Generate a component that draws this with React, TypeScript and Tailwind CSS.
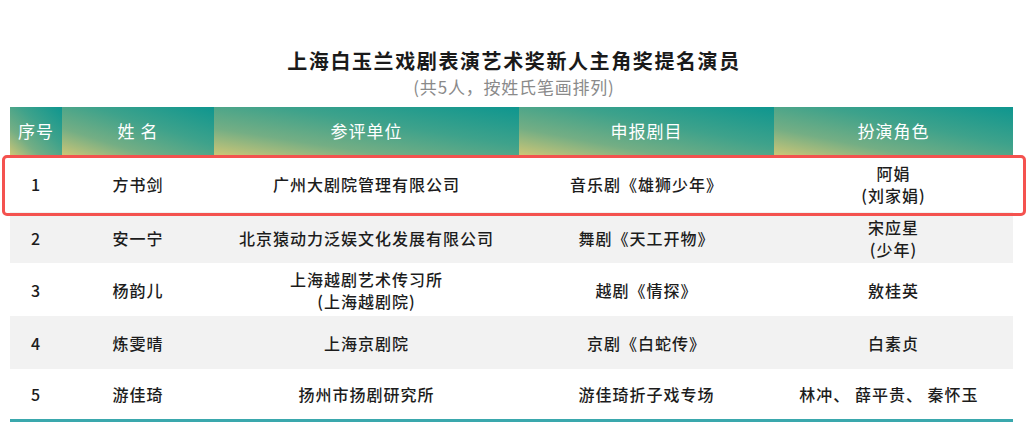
import React from "react";

const cols = "grid grid-cols-[52px_152px_305px_255px_239px]";
const headers = ["序号", "姓 名", "参评单位", "申报剧目", "扮演角色"];

type Row = { h: string; bg: string; cells: React.ReactNode[] };

const rows: Row[] = [
  { h: "h-[57px]", bg: "bg-white", cells: ["1", "方书剑", "广州大剧院管理有限公司", "音乐剧《雄狮少年》", <>阿娟<br />(刘家娟)</>] },
  { h: "h-[51px]", bg: "bg-[#f2f2f2]", cells: ["2", "安一宁", "北京猿动力泛娱文化发展有限公司", "舞剧《天工开物》", <>宋应星<br />(少年)</>] },
  { h: "h-[53px]", bg: "bg-white", cells: ["3", "杨韵儿", <>上海越剧艺术传习所<br />(上海越剧院)</>, "越剧《情探》", "敫桂英"] },
  { h: "h-[53px]", bg: "bg-[#f2f2f2]", cells: ["4", "炼雯晴", "上海京剧院", "京剧《白蛇传》", "白素贞"] },
  { h: "h-[50px]", bg: "bg-white", cells: ["5", "游佳琦", "扬州市扬剧研究所", "游佳琦折子戏专场", "林冲、 薛平贵、 秦怀玉  "] },
];

export default function App() {
  return (
    <div className="relative w-[1028px] h-[429px] bg-white overflow-hidden font-['Noto_Sans_CJK_SC','Noto_Sans',sans-serif] text-[#1c1c1c]">
      <div className="pt-[49px] flex flex-col items-center">
        <div className="text-[20px] leading-[24px] font-bold tracking-[1.6px] text-[#1a1a1a]">上海白玉兰戏剧表演艺术奖新人主角奖提名演员</div>
        <div className="mt-[4px] text-[17px] leading-[19px] text-[#8a8a8a] tracking-[0.8px]">(共5人，按姓氏笔画排列)</div>
      </div>
      <div className="ml-[10px] mt-[11px] w-[1003px]">
        <div className={`${cols} h-[48px]`}>
          {headers.map((t) => (
            <div key={t} className="flex items-center justify-center text-white text-[17px] tracking-[1px] bg-[linear-gradient(to_top_right,#cdc676_0%,#74ae84_28%,#3ea28b_60%,#0e968f_100%)]">
              {t}
            </div>
          ))}
        </div>
        {rows.map((r, i) => (
          <div key={i} className={`${cols} ${r.h} ${r.bg}`}>
            {r.cells.map((c, j) => (
              <div key={j} className="flex items-center justify-center text-center text-[16px] leading-[22px] tracking-[1px] font-medium whitespace-pre">
                {c}
              </div>
            ))}
          </div>
        ))}
        <div className="h-[3px] bg-[#3aa8ad]" />
      </div>
      <div className="absolute left-[2px] top-[155px] w-[1024px] h-[61px] border-[3.5px] border-[#f4524f] rounded-[5px]" />
    </div>
  );
}
